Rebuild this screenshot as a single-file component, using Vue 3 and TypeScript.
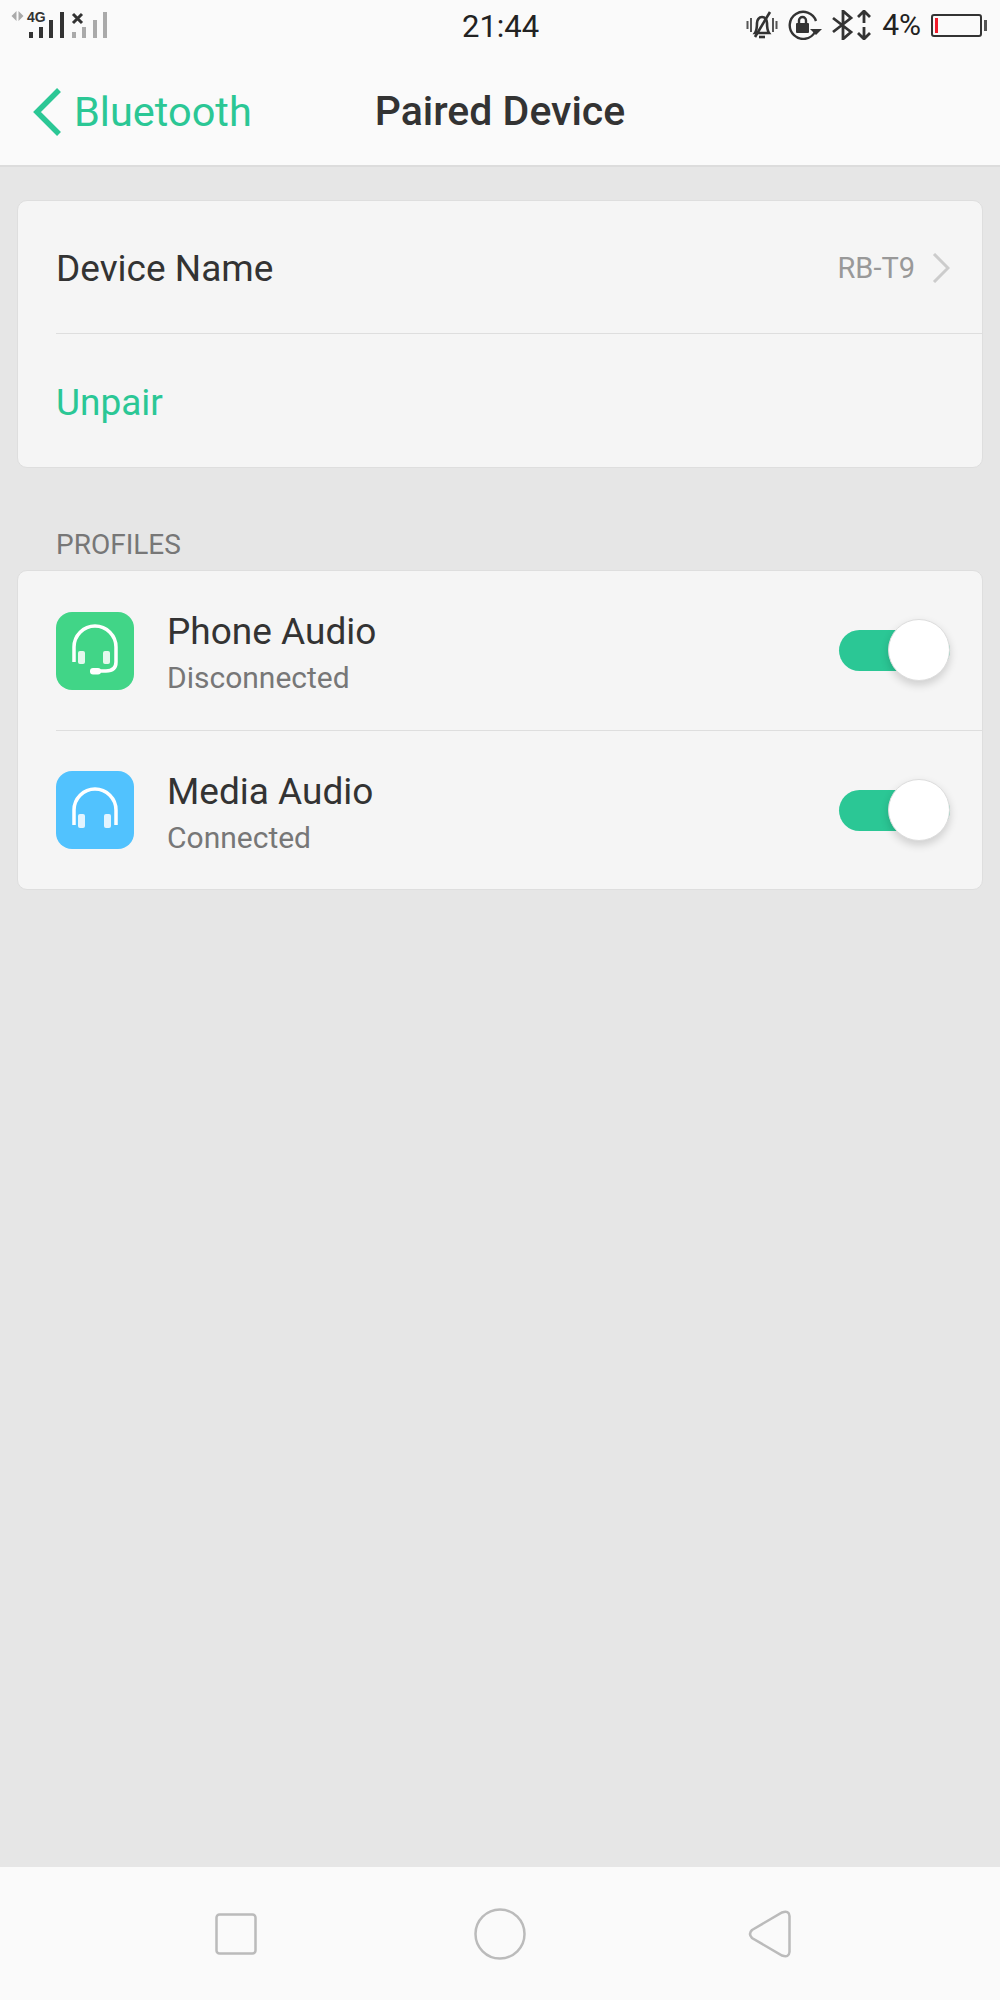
<script setup lang="ts">
interface Profile {
  name: string
  status: string
  kind: 'phone' | 'media'
}

const profiles: Profile[] = [
  { name: 'Phone Audio', status: 'Disconnected', kind: 'phone' },
  { name: 'Media Audio', status: 'Connected', kind: 'media' }
]
</script>

<template>
  <div class="page">
    <header class="top">
      <div class="status">
        <svg class="signal" width="110" height="42" viewBox="0 0 110 42">
          <path d="M16.500 11l-5 5 5 5z M18.500 11l5 5-5 5z" fill="#aaa" />
          <text x="27" y="22" class="net">4G</text>
          <g fill="#333">
            <rect x="29" y="32" width="4" height="6" />
            <rect x="39" y="27" width="4" height="11" />
            <rect x="49" y="20" width="4" height="18" />
            <rect x="60" y="12" width="4" height="26" />
          </g>
          <g fill="#aaa">
            <rect x="72" y="32" width="4" height="6" />
            <rect x="82" y="27" width="4" height="11" />
            <rect x="93" y="20" width="4" height="18" />
            <rect x="103" y="12" width="4" height="26" />
          </g>
          <path d="M73 14 l9 9 M82 14 l-9 9" stroke="#333" stroke-width="3" fill="none" />
        </svg>
        <span class="time">21:44</span>
        <div class="sys">
          <svg width="32" height="28" viewBox="0 0 32 28" fill="none" stroke="#333" stroke-width="2.600">
            <path d="M1.500 10v8 M5 7v14 M30.500 10v8 M27 7v14" stroke="#555" stroke-width="2" />
            <path d="M9 22c2-3 2-6 2-10 0-3 2-6 5-6s5 3 5 6c0 4 0 7 2 10z" />
            <path d="M13 26h6" />
            <path d="M9 26L24 1" />
          </svg>
          <svg width="34" height="30" viewBox="0 0 34 30" fill="none" stroke="#333" stroke-width="2.400">
            <path d="M27 22a13.500 13.500 0 1 1 1-11" />
            <path d="M22 19h12l-6 6z" fill="#333" stroke="none" />
            <rect x="8" y="13" width="13" height="10" rx="1" fill="#333" stroke="none" />
            <path d="M11 13v-2.500a3.500 3.500 0 0 1 7 0V13" />
          </svg>
          <svg width="40" height="30" viewBox="0 0 40 30" fill="none" stroke="#333" stroke-width="2.800">
            <path d="M1 8l18 14-8 7V1l8 7L1 22" />
            <path d="M32 13V1 M26 7l6-6 6 6 M32 17v12 M26 23l6 6 6-6" />
          </svg>
          <span class="pct">4%</span>
          <div class="battery"><i class="level"></i></div>
        </div>
      </div>
      <div class="bar">
        <div class="back">
          <svg width="28" height="48" viewBox="0 0 28 48" fill="none" stroke="#2bc795" stroke-width="5.500">
            <path d="M26 2L4 24l22 22" />
          </svg>
          <span>Bluetooth</span>
        </div>
        <h1>Paired Device</h1>
      </div>
    </header>

    <main class="content">
      <section class="card first">
        <div class="row">
          <span class="label">Device Name</span>
          <span class="value">RB-T9</span>
          <svg width="18" height="30" viewBox="0 0 18 30" fill="none" stroke="#ccc" stroke-width="3">
            <path d="M2 1l14 14L2 29" />
          </svg>
        </div>
        <div class="row unpair">Unpair</div>
      </section>

      <div class="section-title">PROFILES</div>

      <section class="card">
        <div v-for="p in profiles" :key="p.name" class="profile">
          <div class="app-icon" :class="p.kind">
            <svg v-if="p.kind === 'phone'" width="78" height="78" viewBox="0 0 78 78" fill="none" stroke="#fff" stroke-width="3.500">
              <path d="M18 50V35a21 21 0 0 1 42 0v15q0 9-10 9H42" />
              <rect x="22" y="39" width="7" height="13" rx="2" fill="#e4f8ed" stroke="none" />
              <rect x="47" y="39" width="7" height="13" rx="2" fill="#e4f8ed" stroke="none" />
              <rect x="34" y="56" width="11" height="6.500" rx="3" fill="#fff" stroke="none" />
            </svg>
            <svg v-else width="78" height="78" viewBox="0 0 78 78" fill="none" stroke="#fff" stroke-width="3.500">
              <path d="M18 54V39a21 21 0 0 1 42 0v15" />
              <rect x="22" y="43" width="7" height="14" rx="2" fill="#e2f4ff" stroke="none" />
              <rect x="48" y="43" width="7" height="14" rx="2" fill="#e2f4ff" stroke="none" />
            </svg>
          </div>
          <div class="info">
            <div class="name">{{ p.name }}</div>
            <div class="state">{{ p.status }}</div>
          </div>
          <div class="toggle"><i class="knob"></i></div>
        </div>
      </section>
    </main>

    <footer class="nav">
      <svg width="42" height="42" viewBox="0 0 42 42" fill="none" stroke="#bbb" stroke-width="2.500">
        <rect x="1.500" y="1.500" width="39" height="39" rx="3" />
      </svg>
      <svg width="52" height="52" viewBox="0 0 52 52" fill="none" stroke="#bbb" stroke-width="2.500">
        <circle cx="26" cy="26" r="24.500" />
      </svg>
      <svg width="48" height="48" viewBox="-6 0 48 48" fill="none" stroke="#bbb" stroke-width="2.500">
        <path d="M3 20L33 2.500Q40 0 40.500 6V42Q40 48 33 45.500L3 28Q-1 24 3 20z" />
      </svg>
    </footer>
  </div>
</template>

<style scoped>
.page {
  width: 1000px;
  height: 2000px;
  display: flex;
  flex-direction: column;
  background: #e6e6e6;
  font-family: Roboto, "Noto Sans", sans-serif;
  color: #333;
}

.top {
  height: 167px;
  box-sizing: border-box;
  background: #fafafa;
  border-bottom: 2px solid #dcdcdc;
}

.status {
  height: 54px;
  display: flex;
  align-items: center;
  justify-content: space-between;
  position: relative;
  padding: 0 18px 0 0;
}

.signal {
  align-self: flex-start;
}

.net {
  font-family: "Liberation Sans", sans-serif;
  font-size: 14px;
  font-weight: 700;
  fill: #333;
}

.time {
  position: absolute;
  left: 462px;
  top: 9px;
  font-size: 31px;
  line-height: 36px;
  color: #222;
}

.sys {
  display: flex;
  align-items: center;
  gap: 10px;
  margin-top: -4px;
}

.pct {
  font-size: 30px;
  color: #222;
  line-height: 34px;
}

.battery {
  width: 51px;
  height: 23px;
  box-sizing: border-box;
  border: 2px solid #333;
  border-radius: 3px;
  position: relative;
  padding: 2px;
}

.battery::after {
  content: '';
  position: absolute;
  right: -7px;
  top: 4px;
  width: 3px;
  height: 11px;
  background: #555;
}

.level {
  display: block;
  width: 3px;
  height: 100%;
  background: #f01c2c;
}

.bar {
  height: 111px;
  box-sizing: border-box;
  padding-top: 3px;
  position: relative;
  display: flex;
  align-items: center;
  justify-content: center;
}

.back {
  position: absolute;
  left: 33px;
  top: 33px;
  display: flex;
  align-items: center;
  gap: 13px;
  color: #2bc795;
  font-size: 41.500px;
}

.bar h1 {
  margin: 0;
  font-size: 41px;
  font-weight: 500;
  color: #333;
}

.content {
  flex: 1;
  padding: 33px 17px 0;
}

.card {
  background: #f5f5f5;
  border: 1px solid #dedede;
  border-radius: 10px;
}

.row {
  height: 132px;
  box-sizing: border-box;
  margin-left: 38px;
  padding: 2px 32px 0 0;
  display: flex;
  align-items: center;
  font-size: 37px;
}

.row + .row {
  height: 134px;
  padding-top: 3px;
  border-top: 1px solid #dedede;
}

.label {
  flex: 1;
}

.value {
  font-size: 29px;
  color: #999;
  margin-right: 17px;
}

.unpair {
  color: #2bc795;
}

.section-title {
  margin: 58px 0 0 39px;
  height: 44px;
  font-size: 28px;
  line-height: 38px;
  color: #777;
}

.profile {
  height: 159px;
  box-sizing: border-box;
  margin-left: 38px;
  padding-right: 32px;
  display: flex;
  align-items: center;
}

.profile + .profile {
  border-top: 1px solid #dedede;
}

.app-icon {
  width: 78px;
  height: 78px;
  border-radius: 16px;
}

.app-icon.phone {
  background: #41d587;
}

.app-icon.media {
  background: #51c2fe;
}

.info {
  flex: 1;
  margin-left: 33px;
  padding-top: 6px;
}

.name {
  font-size: 37px;
  line-height: 42px;
}

.state {
  margin-top: 7px;
  font-size: 30px;
  line-height: 36px;
  color: #777;
}

.toggle {
  width: 111px;
  height: 41px;
  border-radius: 21px;
  background: #2bc795;
  position: relative;
}

.knob {
  position: absolute;
  right: 0;
  top: -11px;
  width: 62px;
  height: 62px;
  box-sizing: border-box;
  border: 1px solid #ddd;
  border-radius: 50%;
  background: #fff;
  box-shadow: 0 4px 8px rgba(0, 0, 0, 0.16);
}

.nav {
  height: 133px;
  background: #fafafa;
  display: flex;
  align-items: center;
  justify-content: space-between;
  padding: 0 209px 0 215px;
}
</style>
